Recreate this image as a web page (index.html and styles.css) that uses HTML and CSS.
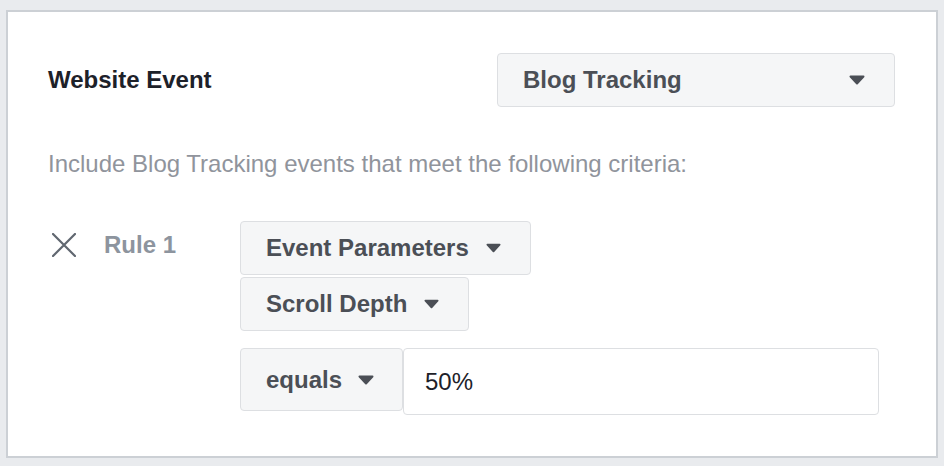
FILE: index.html
```html
<!DOCTYPE html>
<html>
<head>
<meta charset="utf-8">
<link rel="stylesheet" href="styles.css">
</head>
<body>
<div class="card">
  <div class="header-row">
    <div class="label">Website Event</div>
    <div class="select select-wide">
      <span>Blog Tracking</span>
      <svg class="caret" width="16" height="10" viewBox="0 0 16 10"><path d="M1.5 1.5 H14.5 L8 8.5 Z" fill="#4b4f56" stroke="#4b4f56" stroke-width="2" stroke-linejoin="round"/></svg>
    </div>
  </div>
  <div class="desc">Include Blog Tracking events that meet the following criteria:</div>
  <div class="rule-row">
    <div class="rule-head">
      <svg class="close" width="24" height="24" viewBox="0 0 24 24"><path d="M1 1 L23 23 M23 1 L1 23" stroke="#606770" stroke-width="2.2" stroke-linecap="round"/></svg>
      <span class="rule-label">Rule 1</span>
    </div>
    <div class="rule-body">
      <div class="select select-auto">
        <span>Event Parameters</span>
        <svg class="caret" width="15" height="10" viewBox="0 0 16 10"><path d="M1.5 1.5 H14.5 L8 8.5 Z" fill="#4b4f56" stroke="#4b4f56" stroke-width="2" stroke-linejoin="round"/></svg>
      </div>
      <div class="select select-auto">
        <span>Scroll Depth</span>
        <svg class="caret" width="15" height="10" viewBox="0 0 16 10"><path d="M1.5 1.5 H14.5 L8 8.5 Z" fill="#4b4f56" stroke="#4b4f56" stroke-width="2" stroke-linejoin="round"/></svg>
      </div>
      <div class="compare">
        <div class="select select-op">
          <span>equals</span>
          <svg class="caret" width="16" height="10" viewBox="0 0 16 10"><path d="M1.5 1.5 H14.5 L8 8.5 Z" fill="#4b4f56" stroke="#4b4f56" stroke-width="2" stroke-linejoin="round"/></svg>
        </div>
        <div class="value-input">50%</div>
      </div>
    </div>
  </div>
</div>
</body>
</html>
```
FILE: styles.css
```css
html, body {
  margin: 0;
  padding: 0;
}
body {
  background: #e9ebee;
  font-family: "Liberation Sans", Arial, Helvetica, sans-serif;
  font-size: 24px;
  width: 944px;
  height: 466px;
  overflow: hidden;
}
.card {
  box-sizing: border-box;
  margin: 10px 6px 0 6px;
  width: 932px;
  height: 448px;
  background: #fff;
  border: 2px solid #ccd0d5;
  padding: 41px 41px 0 40px;
}
.header-row {
  display: flex;
  justify-content: space-between;
  align-items: center;
  height: 54px;
}
.label {
  font-weight: bold;
  color: #1d2129;
  line-height: 28px;
}
.select {
  box-sizing: border-box;
  display: flex;
  align-items: center;
  height: 54px;
  background: #f5f6f7;
  border: 1px solid #dddfe2;
  border-radius: 4px;
  color: #4b4f56;
  font-weight: bold;
  line-height: 28px;
}
.caret {
  display: block;
  flex: none;
}
.select-wide {
  width: 398px;
  justify-content: space-between;
  padding: 0 29px 0 25px;
}
.select-auto {
  padding: 0 29px 0 25px;
  gap: 17px;
}
.desc {
  margin-top: 43px;
  color: #90949c;
  line-height: 28px;
}
.rule-row {
  display: flex;
  align-items: flex-start;
  margin-top: 43px;
}
.rule-head {
  width: 192px;
  flex: none;
  display: flex;
  align-items: flex-start;
  padding-top: 11px;
}
.close {
  display: block;
  margin-left: 4px;
  margin-top: 1px;
}
.rule-label {
  margin-left: 28px;
  font-weight: bold;
  color: #8d949e;
  line-height: 28px;
  margin-top: -1px;
}
.rule-body {
  display: flex;
  flex-direction: column;
  align-items: flex-start;
  gap: 2px;
}
.compare {
  display: flex;
  align-items: flex-start;
  margin-top: 15px;
}
.select-op {
  width: 163px;
  height: 63px;
  padding: 0 0 0 25px;
  gap: 16px;
}
.value-input {
  box-sizing: border-box;
  width: 476px;
  height: 67px;
  border: 1px solid #dddfe2;
  border-radius: 4px;
  background: #fff;
  display: flex;
  align-items: center;
  padding-left: 21px;
  color: #1d2129;
  line-height: 28px;
}
```
